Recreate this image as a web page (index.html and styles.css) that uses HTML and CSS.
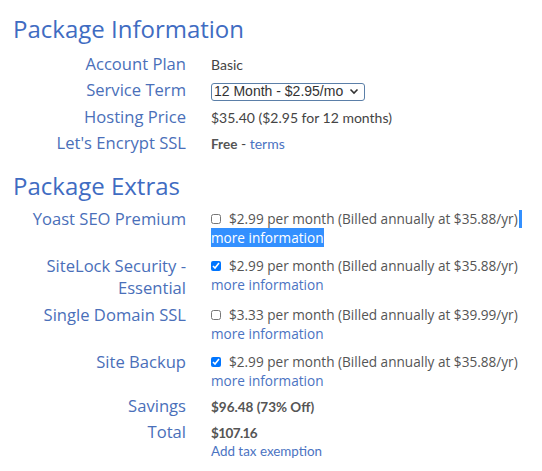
FILE: index.html
```html
<!DOCTYPE html>
<html>
<head>
<meta charset="utf-8">
<link rel="stylesheet" href="styles.css">
</head>
<body>
<div class="page">
  <h2 class="heading">Package Information</h2>
  <div class="info">
    <div class="row">
      <div class="label">Account Plan</div>
      <div class="value">Basic</div>
    </div>
    <div class="row">
      <div class="label">Service Term</div>
      <div class="value">
        <div class="select"><span>12 Month - $2.95/mo</span>
          <svg class="chev" width="10" height="7" viewBox="0 0 10 7"><path d="M1.5 1.5 L5 5 L8.5 1.5" fill="none" stroke="#333" stroke-width="1.6"/></svg>
        </div>
      </div>
    </div>
    <div class="row">
      <div class="label">Hosting Price</div>
      <div class="value">$35.40 ($2.95 for 12 months)</div>
    </div>
    <div class="row">
      <div class="label">Let's Encrypt SSL</div>
      <div class="value"><b>Free</b> - <a class="link">terms</a></div>
    </div>
  </div>

  <h2 class="heading extras-heading">Package Extras</h2>
  <div class="extras">
    <div class="xrow">
      <div class="label">Yoast SEO Premium</div>
      <div class="xvalue">
        <div class="line"><input type="checkbox" class="cb"><span>$2.99 per month (Billed annually at $35.88/yr)</span><span class="caret"></span></div>
        <div class="line"><a class="link sel">more information</a></div>
      </div>
    </div>
    <div class="xrow">
      <div class="label">SiteLock Security -<br>Essential</div>
      <div class="xvalue">
        <div class="line"><input type="checkbox" class="cb" checked><span>$2.99 per month (Billed annually at $35.88/yr)</span></div>
        <div class="line"><a class="link">more information</a></div>
      </div>
    </div>
    <div class="xrow">
      <div class="label">Single Domain SSL</div>
      <div class="xvalue">
        <div class="line"><input type="checkbox" class="cb"><span>$3.33 per month (Billed annually at $39.99/yr)</span></div>
        <div class="line"><a class="link">more information</a></div>
      </div>
    </div>
    <div class="xrow last">
      <div class="label">Site Backup</div>
      <div class="xvalue">
        <div class="line"><input type="checkbox" class="cb" checked><span>$2.99 per month (Billed annually at $35.88/yr)</span></div>
        <div class="line"><a class="link">more information</a></div>
      </div>
    </div>
    <div class="row">
      <div class="label">Savings</div>
      <div class="value"><b>$96.48 (73% Off)</b></div>
    </div>
    <div class="row">
      <div class="label">Total</div>
      <div class="value"><b class="tight">$107.16</b><br><a class="link small">Add tax exemption</a></div>
    </div>
  </div>
</div>
</body>
</html>
```
FILE: styles.css
```css
html, body { margin: 0; padding: 0; background: #fff; }
.page { padding: 13px 8px 8px 13px; font-family: "Open Sans", sans-serif; }
.heading { margin: 0 0 6px 0; font-weight: 400; font-size: 24px; line-height: 32px; color: #3f6cc2; }
.extras-heading { margin-top: 14px; margin-bottom: 6px; }
.label { width: 173px; flex: none; text-align: right; font-size: 16.6px; line-height: 26.3px; color: #4a6fb9; }
.info { display: flex; flex-direction: column; }
.row { display: flex; align-items: baseline; gap: 25px; }
.value { font-family: "Lato", sans-serif; font-size: 14px; line-height: 17px; color: #444; }
.value b { font-weight: 700; font-size: 13.5px; color: #555; }
.value .tight { letter-spacing: -0.6px; }
.value .small { font-size: 13.4px; }
.link { color: #4b73c2; text-decoration: none; }
.select { display: inline-flex; align-items: center; gap: 6px; border: 1px solid #5b7fa8; border-radius: 3px; padding: 0 5px 0 2px; height: 16px; font-family: "Liberation Sans", Arial, sans-serif; font-size: 14px; color: #333; }
.chev { display: block; }
.xrow { display: flex; align-items: flex-start; gap: 25px; }
.xrow .label { line-height: 22px; padding-bottom: 5px; }
.xvalue { padding-bottom: 8px; padding-top: 1px; font-size: 13.6px; line-height: 19px; color: #555; }
.xrow.last .xvalue { padding-bottom: 3px; }
.line { display: flex; align-items: center; }
.cb { width: 10px; height: 10px; margin: 0 8px 0 0; }
.sel { background: #3390ff; color: #fff; }
.caret { display: inline-block; width: 3px; height: 18px; background: #3390ff; margin-left: 1px; }
```
